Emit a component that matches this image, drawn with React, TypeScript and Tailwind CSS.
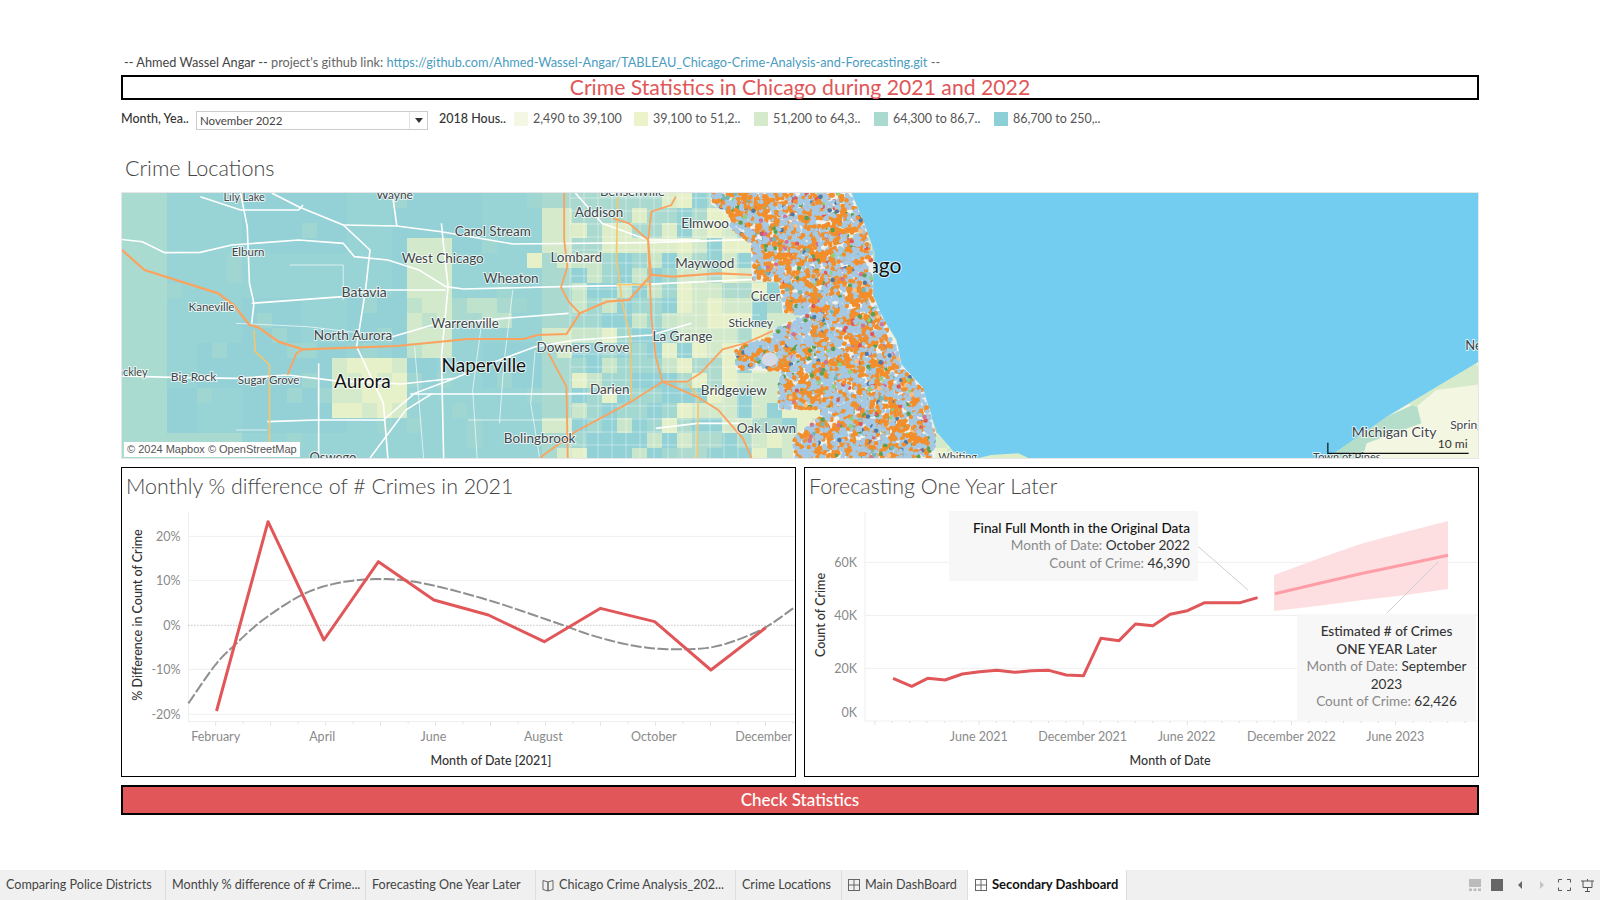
import { useMemo } from "react";

// reference crops were read in stretched coordinates, these put them back to page px
const z2 = (x: number, y: number): [number, number] => [120 + x / 2.24, 190 + y / 3];
const z3 = (x: number, y: number): [number, number] => [700 + x / 2.01, 190 + y / 3];
const zl = (x: number, y: number): [number, number] => [120 + x / 2.31, 465 + y / 3];
const zr = (x: number, y: number): [number, number] => [800 + x / 2.31, 465 + y / 3];

type Conv = (x: number, y: number) => [number, number];
const pts = (conv: Conv, list: number[][]) => list.map(([x, y]) => conv(x, y).join(",")).join(" ");

// catmull-rom, so the trend line stays a curve
function smooth(list: number[][]) {
  const out: number[][] = [];
  for (let i = 0; i < list.length - 1; i++) {
    const p0 = list[Math.max(i - 1, 0)];
    const p1 = list[i];
    const p2 = list[i + 1];
    const p3 = list[Math.min(i + 2, list.length - 1)];
    for (let s = 0; s < 10; s++) {
      const t = s / 10;
      const f = (a: number, b: number, c: number, d: number) =>
        0.5 * (2 * b + (c - a) * t + (2 * a - 5 * b + 4 * c - d) * t * t + (3 * b - a - 3 * c + d) * t * t * t);
      out.push([f(p0[0], p1[0], p2[0], p3[0]), f(p0[1], p1[1], p2[1], p3[1])]);
    }
  }
  out.push(list[list.length - 1]);
  return out;
}

function rng(seed: number) {
  let a = seed;
  return () => {
    a = (a + 0x6d2b79f5) | 0;
    let t = Math.imul(a ^ (a >>> 15), 1 | a);
    t = (t + Math.imul(t ^ (t >>> 7), 61 | t)) ^ t;
    return ((t ^ (t >>> 14)) >>> 0) / 4294967296;
  };
}

const hash = (a: number, b: number) => {
  const s = Math.sin(a * 127.1 + b * 311.7) * 43758.5453;
  return s - Math.floor(s);
};

const LEGEND = [
  { color: "#f4f7e3", label: "2,490 to 39,100" },
  { color: "#edf3c9", label: "39,100 to 51,2.." },
  { color: "#d5eacb", label: "51,200 to 64,3.." },
  { color: "#a9d9cf", label: "64,300 to 86,7.." },
  { color: "#8ccfd6", label: "86,700 to 250,.." },
];

const LAKE = [
  [305, 9], [330, 100], [352, 190], [345, 300], [362, 370], [395, 450], [402, 520], [440, 590], [460, 650], [478, 730],
  [510, 785], [560, 804], [585, 795], [640, 790], [660, 804], [1260, 804], [1380, 680], [1565, 515], [1580, 9],
];

const CITY = [
  [25, 9], [300, 9], [330, 110], [345, 200], [345, 320], [362, 375], [395, 470], [402, 525], [445, 595], [458, 660], [472, 730],
  [470, 804], [190, 804], [190, 745], [245, 680], [245, 655], [160, 655], [160, 580], [165, 540], [75, 535], [72, 475], [150, 440], [150, 420],
  [215, 375], [170, 365], [160, 270], [108, 270], [105, 160], [62, 110], [60, 70], [25, 40],
];

const HIGHWAYS = [
  [[0, 175], [55, 240], [220, 310], [255, 345], [290, 405], [310, 412], [355, 455], [410, 478], [620, 468], [780, 447], [905, 447], [935, 435], [1000, 432], [1030, 370], [1090, 335], [1140, 330], [1190, 255], [1240, 260], [1340, 250], [1420, 255]],
  [[410, 478], [395, 490], [375, 555]],
  [[995, 9], [995, 150], [1002, 230], [988, 292], [1005, 335], [1030, 370]],
  [[1245, 20], [1235, 45], [1190, 65], [1183, 150], [1190, 255]],
  [[1183, 150], [1190, 380], [1200, 500], [1215, 575], [1270, 575], [1300, 550], [1350, 478], [1400, 460], [1510, 395]],
  [[1105, 85], [1140, 100], [1183, 150]],
  [[940, 804], [1020, 725], [1145, 635], [1215, 575]],
  [[1215, 575], [1295, 622], [1340, 660], [1395, 745], [1415, 804]],
  [[960, 490], [1000, 590], [1003, 804]],
];

const YELLOW_ROADS = [
  [[300, 420], [303, 485], [335, 525], [335, 804]],
  [[1115, 20], [1112, 200], [1125, 340], [1143, 440], [1145, 635]],
  [[1112, 285], [1190, 283]],
  [[1270, 575], [1295, 622], [1293, 804]],
];

const WHITE_ROADS = [
  [[0, 148], [50, 155], [100, 188], [180, 187], [250, 165], [400, 150], [500, 160], [525, 200], [600, 210], [670, 240], [730, 290], [770, 297], [990, 290], [1112, 287], [1420, 268]],
  [[500, 105], [620, 108], [720, 125], [880, 162], [1183, 158], [1420, 148]],
  [[270, 9], [285, 110], [290, 280], [300, 340], [295, 400]],
  [[180, 20], [270, 60], [400, 60], [410, 45]],
  [[340, 9], [400, 50], [500, 105], [560, 180], [550, 300], [530, 470], [590, 640], [600, 804]],
  [[720, 100], [725, 170], [735, 290], [720, 500], [725, 804]],
  [[610, 9], [620, 108]],
  [[295, 340], [500, 320], [560, 300], [730, 300]],
  [[610, 440], [700, 405], [860, 385], [1005, 370]],
  [[0, 558], [120, 562], [260, 565], [375, 555], [480, 572], [630, 582], [750, 565], [810, 530], [930, 470], [1020, 450], [1190, 435], [1280, 400]],
  [[330, 695], [440, 690], [590, 690], [660, 610], [750, 565]],
  [[650, 612], [1000, 612], [1145, 610]],
  [[445, 520], [445, 804]],
  [[560, 804], [640, 660], [700, 610]],
  [[1020, 9], [1080, 100], [1183, 150], [1300, 150]],
  [[1200, 715], [1293, 700], [1395, 700]],
];

const THIN_ROADS = [
  [[380, 225], [500, 225], [500, 330]],
  [[260, 400], [420, 410], [610, 440]],
  [[660, 470], [680, 804]],
  [[810, 400], [790, 600], [800, 804]],
  [[880, 300], [860, 520], [850, 700]],
  [[930, 480], [920, 640], [940, 804]],
  [[260, 720], [330, 720]],
  [[780, 690], [1000, 690]],
];

const LABELS: { x: number; y: number; t: string; s: number; a?: "start" | "end"; dark?: boolean }[] = [
  { x: 278, y: 20, t: "Lily Lake", s: 11 },
  { x: 615, y: 14, t: "Wayne", s: 12 },
  { x: 1148, y: 5, t: "Bensenville", s: 13 },
  { x: 1073, y: 68, t: "Addison", s: 13.5 },
  { x: 835, y: 124, t: "Carol Stream", s: 13.5 },
  { x: 287, y: 185, t: "Elburn", s: 11.5 },
  { x: 723, y: 206, t: "West Chicago", s: 13.5 },
  { x: 1022, y: 201, t: "Lombard", s: 13.5 },
  { x: 1257, y: 99, t: "Elmwood Park", s: 13.5, a: "start" },
  { x: 1310, y: 221, t: "Maywood", s: 13.5 },
  { x: 876, y: 264, t: "Wheaton", s: 13.5 },
  { x: 547, y: 307, t: "Batavia", s: 14 },
  { x: 205, y: 351, t: "Kaneville", s: 11.5 },
  { x: 773, y: 401, t: "Warrenville", s: 13.5 },
  { x: 522, y: 436, t: "North Aurora", s: 13.5 },
  { x: 1413, y: 320, t: "Cicero", s: 13, a: "start" },
  { x: 1413, y: 399, t: "Stickney", s: 12 },
  { x: 1260, y: 438, t: "La Grange", s: 13.5 },
  { x: 1037, y: 472, t: "Downers Grove", s: 13.5 },
  { x: 815, y: 527, t: "Naperville", s: 19, dark: true },
  { x: 543, y: 574, t: "Aurora", s: 19, dark: true },
  { x: 62, y: 547, t: "Hinckley", s: 11, a: "end" },
  { x: 165, y: 561, t: "Big Rock", s: 12 },
  { x: 333, y: 569, t: "Sugar Grove", s: 11.5 },
  { x: 1097, y: 598, t: "Darien", s: 13.5 },
  { x: 1375, y: 600, t: "Bridgeview", s: 13.5 },
  { x: 1448, y: 714, t: "Oak Lawn", s: 13.5 },
  { x: 940, y: 744, t: "Bolingbrook", s: 13.5 },
  { x: 477, y: 802, t: "Oswego", s: 13 },
];

const LABELS_EAST: typeof LABELS = [
  { x: 405, y: 226, t: "Chicago", s: 21, a: "end", dark: true },
  { x: 518, y: 802, t: "Whiting", s: 11 },
  { x: 1395, y: 725, t: "Michigan City", s: 14 },
  { x: 1508, y: 703, t: "Springfield", s: 12, a: "start" },
  { x: 1538, y: 465, t: "New Buffalo", s: 13, a: "start" },
  { x: 1300, y: 800, t: "Town of Pines", s: 11 },
];

function inside(px: number, py: number, poly: [number, number][]) {
  let c = false;
  for (let i = 0, j = poly.length - 1; i < poly.length; j = i++) {
    const [xi, yi] = poly[i];
    const [xj, yj] = poly[j];
    if (yi > py !== yj > py && px < ((xj - xi) * (py - yi)) / (yj - yi) + xi) c = !c;
  }
  return c;
}

function tileColor(x: number, y: number) {
  const n = hash(Math.floor(x / 48), Math.floor(y / 48));
  const fine = hash(x, y);
  const [zx, zy] = [(x - 120) * 2.24, (y - 190) * 3];
  if (zx < 75) return "#a9dbd0";
  if (zx < 260 && zy > 700) return "#a9dacf";
  // light pockets round Aurora, West Chicago and the inner suburbs
  if (zx > 445 && zx < 625 && zy > 490 && zy < 680) return fine > 0.3 ? "#e6f1c9" : "#d5eacb";
  if (zx > 625 && zx < 730 && zy > 100 && zy < 470) return fine > 0.3 ? "#d2e9cb" : "#bfe2cc";
  if (zx > 730 && zx < 860 && zy > 300 && zy < 370) return fine > 0.5 ? "#bfe2cc" : "#a9d9cf";
  if (zx > 880 && zx < 930 && zy > 160 && zy < 210) return "#e6f1c9";
  if (zx > 940 && zx < 1010) return fine > 0.6 ? "#d5eacb" : "#a9d9cf";
  if (zx >= 1010 && zx < 1240) {
    if (zy < 160) return fine > 0.55 ? "#dcedc8" : "#a9d9cf";
    if (fine > 0.92) return "#e3f0c9";
    if (fine > 0.74) return "#c9e6cb";
    if (fine > 0.4) return "#a3d8d1";
    return "#92d1d6";
  }
  if (zx >= 1240) {
    if (fine > 0.75) return "#e6f1c9";
    if (fine > 0.4) return "#d2e9cb";
    if (fine > 0.18) return "#aedbce";
    return "#95d2d5";
  }
  if (fine > 0.9) return "#9fd6d2";
  return n > 0.65 ? "#93d1d6" : "#98d3d5";
}

function MapChart() {
  const { tiles, dots } = useMemo(() => {
    const tiles: { x: number; y: number; w: number; h: number; c: string }[] = [];
    for (let x = 122; x < 960; x += 15) {
      for (let y = 193; y < 458; y += 15) {
        const big = hash(x, y + 5) > 0.6;
        tiles.push({ x, y, w: big ? 30 : 15.5, h: hash(x + 3, y) > 0.7 ? 30 : 15.5, c: tileColor(x, y) });
      }
    }
    const poly = CITY.map(([x, y]) => z3(x, y));
    const r = rng(42);
    const palette = ["#e15759", "#59a14f", "#76b7b2", "#4e79a7", "#d37295", "#8cd17d", "#ffbe7d", "#59a14f"];
    const dots: { x: number; y: number; c: string }[] = [];
    let guard = 0;
    while (dots.length < 6500 && guard < 60000) {
      guard++;
      const x = 700 + r() * 250;
      const y = 190 + r() * 270;
      if (!inside(x, y, poly)) continue;
      const cell = hash(Math.floor(x / 6), Math.floor(y / 6));
      // a few bare streaks show through the dots
      if (hash(Math.floor(x / 7) + 9, Math.floor(y / 5)) < 0.04) continue;
      const k = r();
      let c = cell > 0.45 ? "#a5c8e3" : "#f28e2b";
      if (k > 0.78) c = cell > 0.45 ? "#f28e2b" : "#a5c8e3";
      if (k > 0.9) c = palette[Math.floor(r() * palette.length)];
      dots.push({ x, y, c });
    }
    return { tiles, dots };
  }, []);

  return (
    <svg viewBox="122 193 1356 265" className="block h-[265px] w-[1356px]">
      <rect x="122" y="193" width="1356" height="265" fill="#98d3d5" />
      {tiles.map((t, i) => (
        <rect key={i} x={t.x} y={t.y} width={t.w} height={t.h} fill={t.c} />
      ))}
      <rect x="960" y="193" width="80" height="265" fill="#dcedc8" />
      <polygon points={pts(z3, [[1260, 804], [1380, 680], [1565, 515], [1580, 515], [1580, 810], [1260, 810]])} fill="#f3f6e0" />
      <polygon points={pts(z3, [[1265, 790], [1380, 680], [1440, 640], [1450, 700], [1340, 760], [1330, 810], [1265, 810]])} fill="#b5deca" />
      <polygon points={pts(z3, [[1420, 640], [1560, 520], [1580, 580], [1480, 600], [1440, 650]])} fill="#d5eacb" />
      <polygon points={pts(z3, LAKE)} fill="#72cdf1" />
      {THIN_ROADS.map((r, i) => (
        <polyline key={i} points={pts(z2, r)} fill="none" stroke="#ffffff" strokeOpacity="0.65" strokeWidth="1" />
      ))}
      {Array.from({ length: 14 }, (_, i) => (
        <line key={i} x1={570 + i * 14} y1="193" x2={570 + i * 14} y2="458" stroke="#ffffff" strokeOpacity="0.5" strokeWidth="0.8" />
      ))}
      {Array.from({ length: 20 }, (_, i) => (
        <line key={i} x1="570" y1={198 + i * 13} x2="760" y2={198 + i * 13} stroke="#ffffff" strokeOpacity="0.5" strokeWidth="0.8" />
      ))}
      {WHITE_ROADS.map((r, i) => (
        <polyline key={i} points={pts(z2, r)} fill="none" stroke="#ffffff" strokeWidth="1.6" />
      ))}
      {YELLOW_ROADS.map((r, i) => (
        <polyline key={i} points={pts(z2, r)} fill="none" stroke="#f7c66b" strokeWidth="1.6" />
      ))}
      {HIGHWAYS.map((r, i) => (
        <polyline key={i} points={pts(z2, r)} fill="none" stroke="#fba35e" strokeWidth={i === 0 ? 2.2 : 1.8} />
      ))}
      <g fontFamily="Lato, sans-serif" strokeLinejoin="round">
        {LABELS.map((l) => {
          const [x, y] = z2(l.x, l.y);
          return (
            <text key={l.t} x={x} y={y} dy="0.35em" fontSize={l.s} textAnchor={l.a ?? "middle"} fill={l.dark ? "#111111" : "#3f4648"} stroke="#ffffff" strokeOpacity="0.75" strokeWidth="2" paintOrder="stroke">
              {l.t}
            </text>
          );
        })}
        {LABELS_EAST.map((l) => {
          const [x, y] = z3(l.x, l.y);
          return (
            <text key={l.t} x={x} y={y} dy="0.35em" fontSize={l.s} textAnchor={l.a ?? "middle"} fill={l.dark ? "#111111" : "#3f4648"} stroke="#ffffff" strokeOpacity="0.75" strokeWidth="2" paintOrder="stroke">
              {l.t}
            </text>
          );
        })}
      </g>
      <polygon points={pts(z3, CITY)} fill="#eef1ee" stroke="#eef1ee" strokeWidth="3" />
      {dots.map((d, i) => (
        <circle key={i} cx={d.x} cy={d.y} r="2.2" fill={d.c} />
      ))}
      <ellipse cx={z3(140, 508)[0]} cy={z3(140, 508)[1]} rx="8" ry="7" fill="#d5dbe6" />
      <polyline points={pts(z3, [[1262, 758], [1262, 790], [1545, 790]])} fill="none" stroke="#111111" strokeWidth="1.2" />
      <text x={z3(1513, 761)[0]} y={z3(1513, 761)[1]} dy="0.35em" fontSize="12" textAnchor="middle" fill="#333333" fontFamily="Lato, sans-serif">
        10 mi
      </text>
    </svg>
  );
}

function DiffChart() {
  const red = [[223, 738], [342, 170], [471, 525], [597, 290], [725, 405], [851, 450], [980, 530], [1110, 430], [1235, 470], [1365, 615], [1492, 488]];
  const trend = smooth([[158, 715], [220, 600], [265, 540], [330, 465], [420, 390], [500, 355], [597, 342], [700, 355], [850, 405], [1000, 470], [1100, 515], [1200, 545], [1290, 553], [1380, 543], [1480, 495], [1555, 430]]);
  const yTicks = [[214, "20%"], [346, "10%"], [481, "0%"], [613, "-10%"], [748, "-20%"]] as const;
  const xTicks = [[221, "February"], [467, "April"], [724, "June"], [978, "August"], [1233, "October"], [1487, "December"]] as const;
  const [ax] = zl(158, 0);
  const axisBottom = zl(0, 770)[1];
  return (
    <svg viewBox="122 501 673 275" className="block h-[275px] w-[673px] font-[Lato,sans-serif]">
      <line x1={ax} y1={zl(0, 140)[1]} x2={ax} y2={axisBottom} stroke="#eeeeee" />
      <line x1={ax} y1={axisBottom} x2="795" y2={axisBottom} stroke="#eeeeee" />
      {yTicks.map(([y, t]) => {
        const Y = zl(0, y)[1];
        return (
          <g key={t}>
            <line x1={ax} y1={Y} x2="795" y2={Y} stroke={t === "0%" ? "#a8a8a8" : "#efefef"} strokeDasharray={t === "0%" ? "1 2" : undefined} />
            <text x={zl(140, 0)[0]} y={Y} dy="0.35em" fontSize="12.5" textAnchor="end" fill="#8a8a8a">
              {t}
            </text>
          </g>
        );
      })}
      {Array.from({ length: 22 }, (_, i) => {
        const X = zl(221 + i * 63.5, 0)[0];
        return <line key={i} x1={X} y1={axisBottom} x2={X} y2={axisBottom + (i % 2 === 0 ? 4 : 2)} stroke="#e2e2e2" />;
      })}
      {xTicks.map(([x, t]) => (
        <text key={t} x={zl(x, 0)[0]} y={zl(0, 816)[1]} dy="0.35em" fontSize="12.5" textAnchor="middle" fill="#8a8a8a">
          {t}
        </text>
      ))}
      <polyline points={pts(zl, trend)} fill="none" stroke="#8f8f8f" strokeWidth="2" strokeDasharray="11 2.5" />
      <polyline points={pts(zl, red)} fill="none" stroke="#e15759" strokeWidth="3" strokeLinejoin="round" />
      <text x={zl(857, 0)[0]} y={zl(0, 887)[1]} dy="0.35em" fontSize="12.5" fontWeight="500" textAnchor="middle" fill="#333333">
        Month of Date [2021]
      </text>
      <text transform={`translate(${zl(40, 0)[0]} ${zl(0, 450)[1]}) rotate(-90)`} dy="0.35em" fontSize="12.5" fontWeight="500" textAnchor="middle" fill="#333333">
        % Difference in Count of Crime
      </text>
    </svg>
  );
}

function ForecastChart() {
  const red = [[215, 640], [258, 664], [295, 640], [335, 645], [375, 627], [415, 620], [455, 616], [495, 622], [535, 617], [575, 616], [615, 630], [655, 632], [695, 520], [737, 527], [775, 477], [815, 482], [855, 448], [895, 437], [935, 413], [975, 413], [1017, 413], [1057, 398]];
  const pink = [[1097, 386], [1200, 355], [1300, 325], [1400, 298], [1497, 271]];
  const band = [[1095, 330], [1200, 280], [1300, 235], [1400, 200], [1497, 168], [1497, 372], [1400, 390], [1300, 405], [1200, 422], [1095, 438]];
  const yTicks = [[292, "60K", 292], [451, "40K", 452], [610, "20K", 611], [768, "0K", 743]] as const;
  const xTicks = [[413, "June 2021"], [653, "December 2021"], [893, "June 2022"], [1135, "December 2022"], [1375, "June 2023"]] as const;
  const [ax] = zr(150, 0);
  const axisBottom = zr(0, 768)[1];
  return (
    <div className="relative h-[275px] w-[673px]">
      <svg viewBox="805 501 673 275" className="block h-[275px] w-[673px] font-[Lato,sans-serif]">
        <line x1={ax} y1={zr(0, 140)[1]} x2={ax} y2={axisBottom} stroke="#eeeeee" />
        {yTicks.map(([y, t, ly]) => (
          <g key={t}>
            <line x1={ax} y1={zr(0, y)[1]} x2="1478" y2={zr(0, y)[1]} stroke="#efefef" />
            <text x={zr(132, 0)[0]} y={zr(0, ly)[1]} dy="0.35em" fontSize="12.5" textAnchor="end" fill="#8a8a8a">
              {t}
            </text>
          </g>
        ))}
        {Array.from({ length: 35 }, (_, i) => {
          const X = zr(173 + i * 40.1, 0)[0];
          return <line key={i} x1={X} y1={axisBottom} x2={X} y2={axisBottom + (i % 6 === 0 ? 4 : 2)} stroke="#e2e2e2" />;
        })}
        {xTicks.map(([x, t]) => (
          <text key={t} x={zr(x, 0)[0]} y={zr(0, 816)[1]} dy="0.35em" fontSize="12.5" textAnchor="middle" fill="#8a8a8a">
            {t}
          </text>
        ))}
        <polygon points={pts(zr, band)} fill="#fddfe2" />
        <polyline points={pts(zr, pink)} fill="none" stroke="#ff9da7" strokeWidth="3" />
        <polyline points={pts(zr, red)} fill="none" stroke="#e15759" strokeWidth="3" strokeLinejoin="round" />
        <polyline points={pts(zr, [[920, 245], [1035, 375]])} fill="none" stroke="#d0d0d0" />
        <polyline points={pts(zr, [[1475, 290], [1355, 445]])} fill="none" stroke="#d0d0d0" />
        <text x={zr(855, 0)[0]} y={zr(0, 887)[1]} dy="0.35em" fontSize="12.5" fontWeight="500" textAnchor="middle" fill="#333333">
          Month of Date
        </text>
        <text transform={`translate(${zr(48, 0)[0]} ${zr(0, 450)[1]}) rotate(-90)`} dy="0.35em" fontSize="12.5" fontWeight="500" textAnchor="middle" fill="#333333">
          Count of Crime
        </text>
      </svg>
      <div className="absolute left-[144px] top-[10px] flex h-[70px] w-[249px] flex-col justify-center bg-[#f7f7f7] pr-[8px] text-right text-[13.6px] leading-[17.5px] text-[#8a8a8a]">
        <div className="font-medium text-[#111111]">Final Full Month in the Original Data</div>
        <div>
          Month of Date: <span className="text-[#333333]">October 2022</span>
        </div>
        <div>
          Count of Crime: <span className="text-[#333333]">46,390</span>
        </div>
      </div>
      <div className="absolute left-[492px] top-[113px] flex h-[106px] w-[179px] flex-col justify-center bg-[#f7f7f7] text-center text-[13.6px] leading-[17.5px] text-[#8a8a8a]">
        <div className="font-medium text-[#333333]">Estimated # of Crimes</div>
        <div className="font-medium text-[#333333]">ONE YEAR Later</div>
        <div>
          Month of Date: <span className="text-[#333333]">September 2023</span>
        </div>
        <div>
          Count of Crime: <span className="text-[#333333]">62,426</span>
        </div>
      </div>
    </div>
  );
}

function GridIcon() {
  return (
    <svg viewBox="0 0 12 12" className="h-[12px] w-[12px] shrink-0" fill="none" stroke="#666666" strokeWidth="1">
      <rect x="0.5" y="0.5" width="11" height="11" />
      <path d="M6 0.5V11.5M0.5 6H11.5" />
    </svg>
  );
}

function BookIcon() {
  return (
    <svg viewBox="0 0 12 13" className="h-[13px] w-[12px] shrink-0" fill="none" stroke="#666666" strokeWidth="1">
      <path d="M1 1.5L6 3V12L1 10.5ZM11 1.5L6 3V12L11 10.5Z" />
    </svg>
  );
}

function Tab({ w, label, icon, active }: { w: string; label: string; icon?: React.ReactNode; active?: boolean }) {
  return (
    <div className={`flex h-full items-center gap-[5px] border-r border-[#dddddd] ${w} ${active ? "bg-white pl-[7px] text-[13px] font-bold text-[#111111]" : "pl-[6px] text-[12.6px] text-[#444444]"}`}>
      {icon}
      <span className="whitespace-nowrap">{label}</span>
    </div>
  );
}

export default function App() {
  return (
    <div className="flex h-[900px] w-[1600px] flex-col overflow-hidden bg-white font-[Lato,sans-serif]">
      <div className="flex flex-1 flex-col pl-[121px] pr-[121px] pt-[54px]">
        <div className="h-[15px] overflow-hidden whitespace-nowrap pl-[3px] text-[12.75px] leading-[16px] text-[#666666]">
          <span className="text-[#444444]">-- Ahmed Wassel Angar -- </span>project's github link: <span className="text-[#4a9cc0]">https://github.com/Ahmed-Wassel-Angar/TABLEAU_Chicago-Crime-Analysis-and-Forecasting.git</span> --
        </div>
        <div className="mt-[6px] flex h-[25px] items-center justify-center border-2 border-black text-[21.2px] text-[#e15759]">
          Crime Statistics in Chicago during 2021 and 2022
        </div>
        <div className="mt-[11px] flex h-[19px] items-center text-[12.5px] text-[#555555]">
          <div className="mb-[3px] w-[75px] whitespace-nowrap font-medium text-[#333333]">Month, Yea..</div>
          <div className="flex h-[19px] w-[232px] items-center border border-[#cccccc] pl-[3px] text-[11.5px] text-[#444444]">
            <span className="flex-1">November 2022</span>
            <div className="flex h-full w-[18px] items-center justify-center border-l border-[#e2e2e2]">
              <svg viewBox="0 0 8 5" className="h-[5px] w-[8px]" fill="#333333">
                <path d="M0 0H8L4 5Z" />
              </svg>
            </div>
          </div>
          <div className="mb-[3px] ml-[11px] w-[75px] whitespace-nowrap font-medium text-[#333333]">2018 Hous..</div>
          {LEGEND.map((l) => (
            <div key={l.label} className="mb-[3px] flex w-[120px] items-center gap-[5px]">
              <div className="h-[14px] w-[14px]" style={{ background: l.color }} />
              <span className="whitespace-nowrap">{l.label}</span>
            </div>
          ))}
        </div>
        <div className="mt-[25px] h-[37px] pl-[4px] text-[21.6px] font-light leading-[26px] text-[#444444]">Crime Locations</div>
        <div className="relative h-[267px] border border-[#e6e6e6]">
          <MapChart />
          <div className="absolute bottom-[1px] left-[2px] bg-white px-[3px] font-['Liberation_Sans',sans-serif] text-[11px] leading-[15px] text-[#555555]">
            © 2024 Mapbox © OpenStreetMap
          </div>
        </div>
        <div className="mt-[8px] flex gap-[8px]">
          <div className="h-[310px] w-[675px] border border-black">
            <div className="h-[33px] pl-[4px] pt-[4px] text-[21.4px] font-light leading-[28px] text-[#444444]">Monthly % difference of # Crimes in 2021</div>
            <DiffChart />
          </div>
          <div className="h-[310px] w-[675px] border border-black">
            <div className="h-[33px] pl-[4px] pt-[4px] text-[21.4px] font-light leading-[28px] text-[#444444]">Forecasting One Year Later</div>
            <ForecastChart />
          </div>
        </div>
        <div className="mt-[8px] flex h-[30px] items-center justify-center border-2 border-black bg-[#e15759] text-[17px] font-medium text-white">
          Check Statistics
        </div>
      </div>
      <div className="flex h-[30px] items-center bg-[#f0f0f0]">
        <Tab w="w-[166px]" label="Comparing Police Districts" />
        <Tab w="w-[200px]" label="Monthly % difference of # Crime..." />
        <Tab w="w-[170px]" label="Forecasting One Year Later" />
        <Tab w="w-[200px]" label="Chicago Crime Analysis_202..." icon={<BookIcon />} />
        <Tab w="w-[106px]" label="Crime Locations" />
        <Tab w="w-[126px]" label="Main DashBoard" icon={<GridIcon />} />
        <Tab w="w-[159px]" label="Secondary Dashboard" icon={<GridIcon />} active />
        <div className="ml-auto flex items-center gap-[10px] pr-[6px]">
          <svg viewBox="0 0 12 12" className="h-[12px] w-[12px]" fill="#bbbbbb">
            <rect width="12" height="8" />
            <rect y="9.5" width="3" height="2.5" />
            <rect x="4.5" y="9.5" width="3" height="2.5" />
            <rect x="9" y="9.5" width="3" height="2.5" />
          </svg>
          <svg viewBox="0 0 12 12" className="h-[12px] w-[12px]" fill="#666666">
            <rect width="12" height="12" />
          </svg>
          <svg viewBox="0 0 12 12" className="ml-[1px] h-[12px] w-[12px]" fill="#666666">
            <path d="M8 2V10L4 6Z" />
          </svg>
          <svg viewBox="0 0 12 12" className="h-[12px] w-[12px]" fill="#c4c4c4">
            <path d="M4 2V10L8 6Z" />
          </svg>
          <svg viewBox="0 0 13 12" className="h-[12px] w-[13px]" fill="none" stroke="#555555" strokeWidth="1">
            <path d="M0.5 3.5V0.5H4M9 0.5H12.5V3.5M12.5 8.5V11.5H9M4 11.5H0.5V8.5" />
          </svg>
          <svg viewBox="0 0 13 13" className="h-[13px] w-[13px]" fill="none" stroke="#555555" strokeWidth="1">
            <path d="M0 2H13M2 2V8.5H11V2M6.5 0V2M6.5 8.5V12M4 12.5H9" />
          </svg>
        </div>
      </div>
    </div>
  );
}
